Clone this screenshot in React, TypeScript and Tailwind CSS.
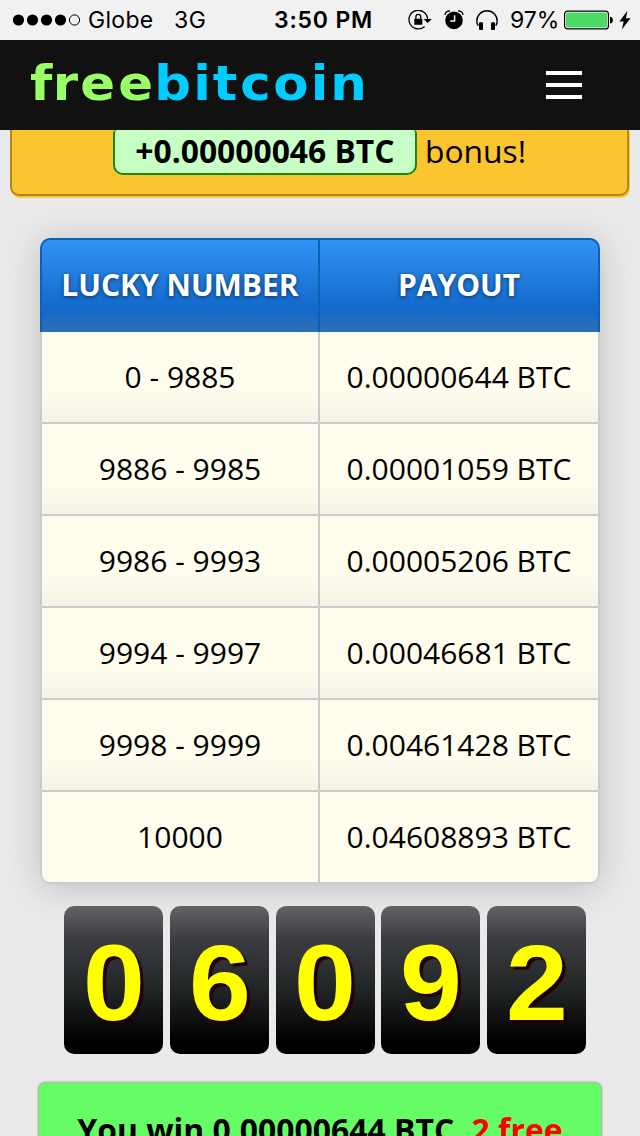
import type { ReactNode } from 'react'

interface PayoutRow {
    range: string
    amount: string
}

const payouts: PayoutRow[] = [
    { range: '0 - 9885', amount: '0.00000644 BTC' },
    { range: '9886 - 9985', amount: '0.00001059 BTC' },
    { range: '9986 - 9993', amount: '0.00005206 BTC' },
    { range: '9994 - 9997', amount: '0.00046681 BTC' },
    { range: '9998 - 9999', amount: '0.00461428 BTC' },
    { range: '10000', amount: '0.04608893 BTC' },
]

const digits = ['0', '6', '0', '9', '2']

function SignalDots() {
    return (
        <svg className="w-[69px] h-3 shrink-0" viewBox="0 0 69 12">
            {[5.5, 19.5, 33.5, 47.5].map((cx) => (
                <circle key={cx} cx={cx} cy="6" r="5.6" fill="#000" />
            ))}
            <circle cx="61.5" cy="6" r="5.1" fill="none" stroke="#000" strokeWidth="1" />
        </svg>
    )
}

function RotationLockIcon() {
    return (
        <svg className="w-6 h-5 shrink-0" viewBox="0 0 24 20" fill="none">
            <path d="M16.6 16.4A9.3 9.3 0 1 1 19.6 9.5" stroke="#000" strokeWidth="1.3" />
            <path d="M15.6 9h8.2l-4.1 4z" fill="#000" />
            <rect x="6.3" y="8.8" width="8" height="6" rx="0.6" fill="#000" />
            <path d="M7.9 9.2V6.8a2.4 2.4 0 0 1 4.8 0v2.4" stroke="#000" strokeWidth="1.3" />
        </svg>
    )
}

function AlarmIcon() {
    return (
        <svg className="w-5 h-5 shrink-0" viewBox="0 0 20 20" fill="none">
            <circle cx="10" cy="10.4" r="8.8" fill="#000" />
            <path d="M.9 4.8A4.6 4.6 0 0 1 6 1.1M19.1 4.8A4.6 4.6 0 0 0 14 1.1" stroke="#000" strokeWidth="1.4" />
            <path d="M10.6 5.2v5.9H6.2" stroke="#f1f1f1" strokeWidth="1.5" />
        </svg>
    )
}

function HeadphonesIcon() {
    return (
        <svg className="w-[22px] h-5 shrink-0" viewBox="0 0 22 20" fill="none">
            <path d="M2.2 15.6C1.2 14 .8 12.5.8 11a10.2 10.2 0 0 1 20.4 0c0 1.5-.4 3-1.4 4.6" stroke="#000" strokeWidth="1.4" />
            <rect x="3" y="12.2" width="4" height="7.8" rx="1" fill="#000" />
            <rect x="15" y="12.2" width="4" height="7.8" rx="1" fill="#000" />
        </svg>
    )
}

function BatteryIcon() {
    return (
        <svg className="w-[50px] h-5 shrink-0" viewBox="0 0 50 20" fill="none">
            <rect x="0.6" y="1.1" width="43.8" height="17.8" rx="3" fill="#fff" stroke="#000" strokeWidth="1.2" />
            <rect x="2" y="2.5" width="41" height="15" rx="1.6" fill="#4cd964" />
            <path d="M46 6.8c1.8.2 2.8 1.3 2.8 3.4s-1 3.2-2.8 3.4z" fill="#000" />
        </svg>
    )
}

function BoltIcon() {
    return (
        <svg className="w-3 h-5 shrink-0" viewBox="0 0 12 20">
            <path d="M8.4.8.4 11.4h4.3L2.8 19.6l8.8-11.4H6.9z" fill="#000" />
        </svg>
    )
}

function StatusBar() {
    return (
        <div className="h-10 shrink-0 bg-[#f1f1f1] flex items-center pl-[13px] font-['Inter',sans-serif] text-[23px] text-black whitespace-nowrap">
            <SignalDots />
            <span className="ml-[6px] w-[86px] tracking-[0.3px]">Globe</span>
            <span className="w-[100px] tracking-[0.5px]">3G</span>
            <span className="w-[134px] font-semibold tracking-[0.8px]">3:50 PM</span>
            <RotationLockIcon />
            <span className="ml-[12px] flex"><AlarmIcon /></span>
            <span className="ml-[12px] flex"><HeadphonesIcon /></span>
            <span className="ml-[12px] w-[54px]">97%</span>
            <BatteryIcon />
            <span className="ml-[5px] flex"><BoltIcon /></span>
        </div>
    )
}

function Logo() {
    return (
        <svg className="w-[350px] h-20" viewBox="0 0 350 80">
            <g transform="scale(1.06 1)" fontFamily="'DejaVu Sans', sans-serif" fontWeight="700" fontSize="48.5">
                <text y="55" x="0.1 21.4 47.5 83.3" fill="#99ff66">free</text>
                <text y="55" x="117.3 154 172.4 198.3 229.5 264.9 283.3" fill="#00ccff">bitcoin</text>
            </g>
        </svg>
    )
}

function NavBar() {
    return (
        <header className="h-[90px] shrink-0 bg-[#111] flex items-center justify-between pl-[30px] pr-[58px]">
            <Logo />
            <button className="flex flex-col gap-2" aria-label="Menu">
                <span className="block w-9 h-1 bg-white" />
                <span className="block w-9 h-1 bg-white" />
                <span className="block w-9 h-1 bg-white" />
            </button>
        </header>
    )
}

function BonusPanel() {
    return (
        <div className="ml-[10px] mr-[11px] h-[66px] shrink-0 bg-[#fbc530] border-2 border-t-0 border-[#b58618] rounded-b-[9px] shadow-[1px_2px_0_#fbc544] flex items-start justify-center text-[31.8px] leading-[42px]">
            <span className="h-[45px] w-[304px] text-center font-bold bg-[#c8ffc4] border-2 border-t-0 border-[#158a12] rounded-b-[10px] rounded-t-[4px]">
                +0.00000046 BTC
            </span>
            <span className="ml-2">bonus!</span>
        </div>
    )
}

function HeadCell({ children }: { children: ReactNode }) {
    return (
        <div className="flex items-center justify-center pb-[3px] font-bold text-white [text-shadow:0_1px_4px_rgba(0,0,0,0.6)]">
            {children}
        </div>
    )
}

function PayoutTable() {
    return (
        <div className="mx-10 mt-[42px] shrink-0 rounded-[10px] shadow-[0_4px_36px_rgba(0,0,0,0.19)] text-[30px]">
            <div className="h-[94px] grid grid-cols-[278px_1fr] rounded-t-[10px] border-2 border-b-0 border-[#0862b5] bg-linear-to-b from-[#3093f5] via-[#1269cb] via-75% to-[#2d6fb5] divide-x-2 divide-[#0862b5]">
                <HeadCell>LUCKY NUMBER</HeadCell>
                <HeadCell>PAYOUT</HeadCell>
            </div>
            <div className="rounded-b-[10px] border-2 border-t-0 border-[#ccc] overflow-hidden divide-y-2 divide-[#ccc]">
                {payouts.map(({ range, amount }, i) => (
                    <div
                        key={range}
                        className={`grid grid-cols-[278px_1fr] divide-x-2 divide-[#ccc] ${i === payouts.length - 1 ? 'h-[90px] bg-[#fefcec]' : 'h-[92px] bg-linear-to-b from-[#fefcec] from-65% to-[#f4f3e7]'}`}
                    >
                        <div className="flex items-center justify-center pb-[2px]">{range}</div>
                        <div className="flex items-center justify-center pb-[2px]">{amount}</div>
                    </div>
                ))}
            </div>
        </div>
    )
}

function Counter() {
    return (
        <div className="mt-[22px] ml-16 w-[522px] shrink-0 flex justify-between">
            {digits.map((digit, i) => (
                <div
                    key={i}
                    className="w-[99px] h-[148px] pt-[5px] rounded-[10px] bg-[linear-gradient(to_bottom,#626367,#3b3d41_22%,#232627_55%,#000_92%)] flex items-center justify-center font-['Liberation_Sans',sans-serif] font-bold text-[108px] leading-none text-[#ff0] [text-shadow:3px_3px_1px_#200000]"
                >
                    <span className="pl-px scale-x-[1.03]">{digit}</span>
                </div>
            ))}
        </div>
    )
}

export default function App() {
    return (
        <div className="w-[640px] h-[1136px] overflow-hidden flex flex-col bg-[#eaeaea] font-['Open_Sans',sans-serif] text-black">
            <StatusBar />
            <NavBar />
            <BonusPanel />
            <PayoutTable />
            <Counter />
            {/* Roll result */}
            <div className="mt-[29px] mx-[39px] h-[120px] shrink-0 rounded-[6px] bg-[#66fc66] shadow-[0_0_3px_#555] pt-[23px] text-center text-[31.9px] leading-[48px] font-bold whitespace-nowrap">
                You win 0.00000644 BTC, <span className="text-[#f00]">2 free</span>
            </div>
        </div>
    )
}
